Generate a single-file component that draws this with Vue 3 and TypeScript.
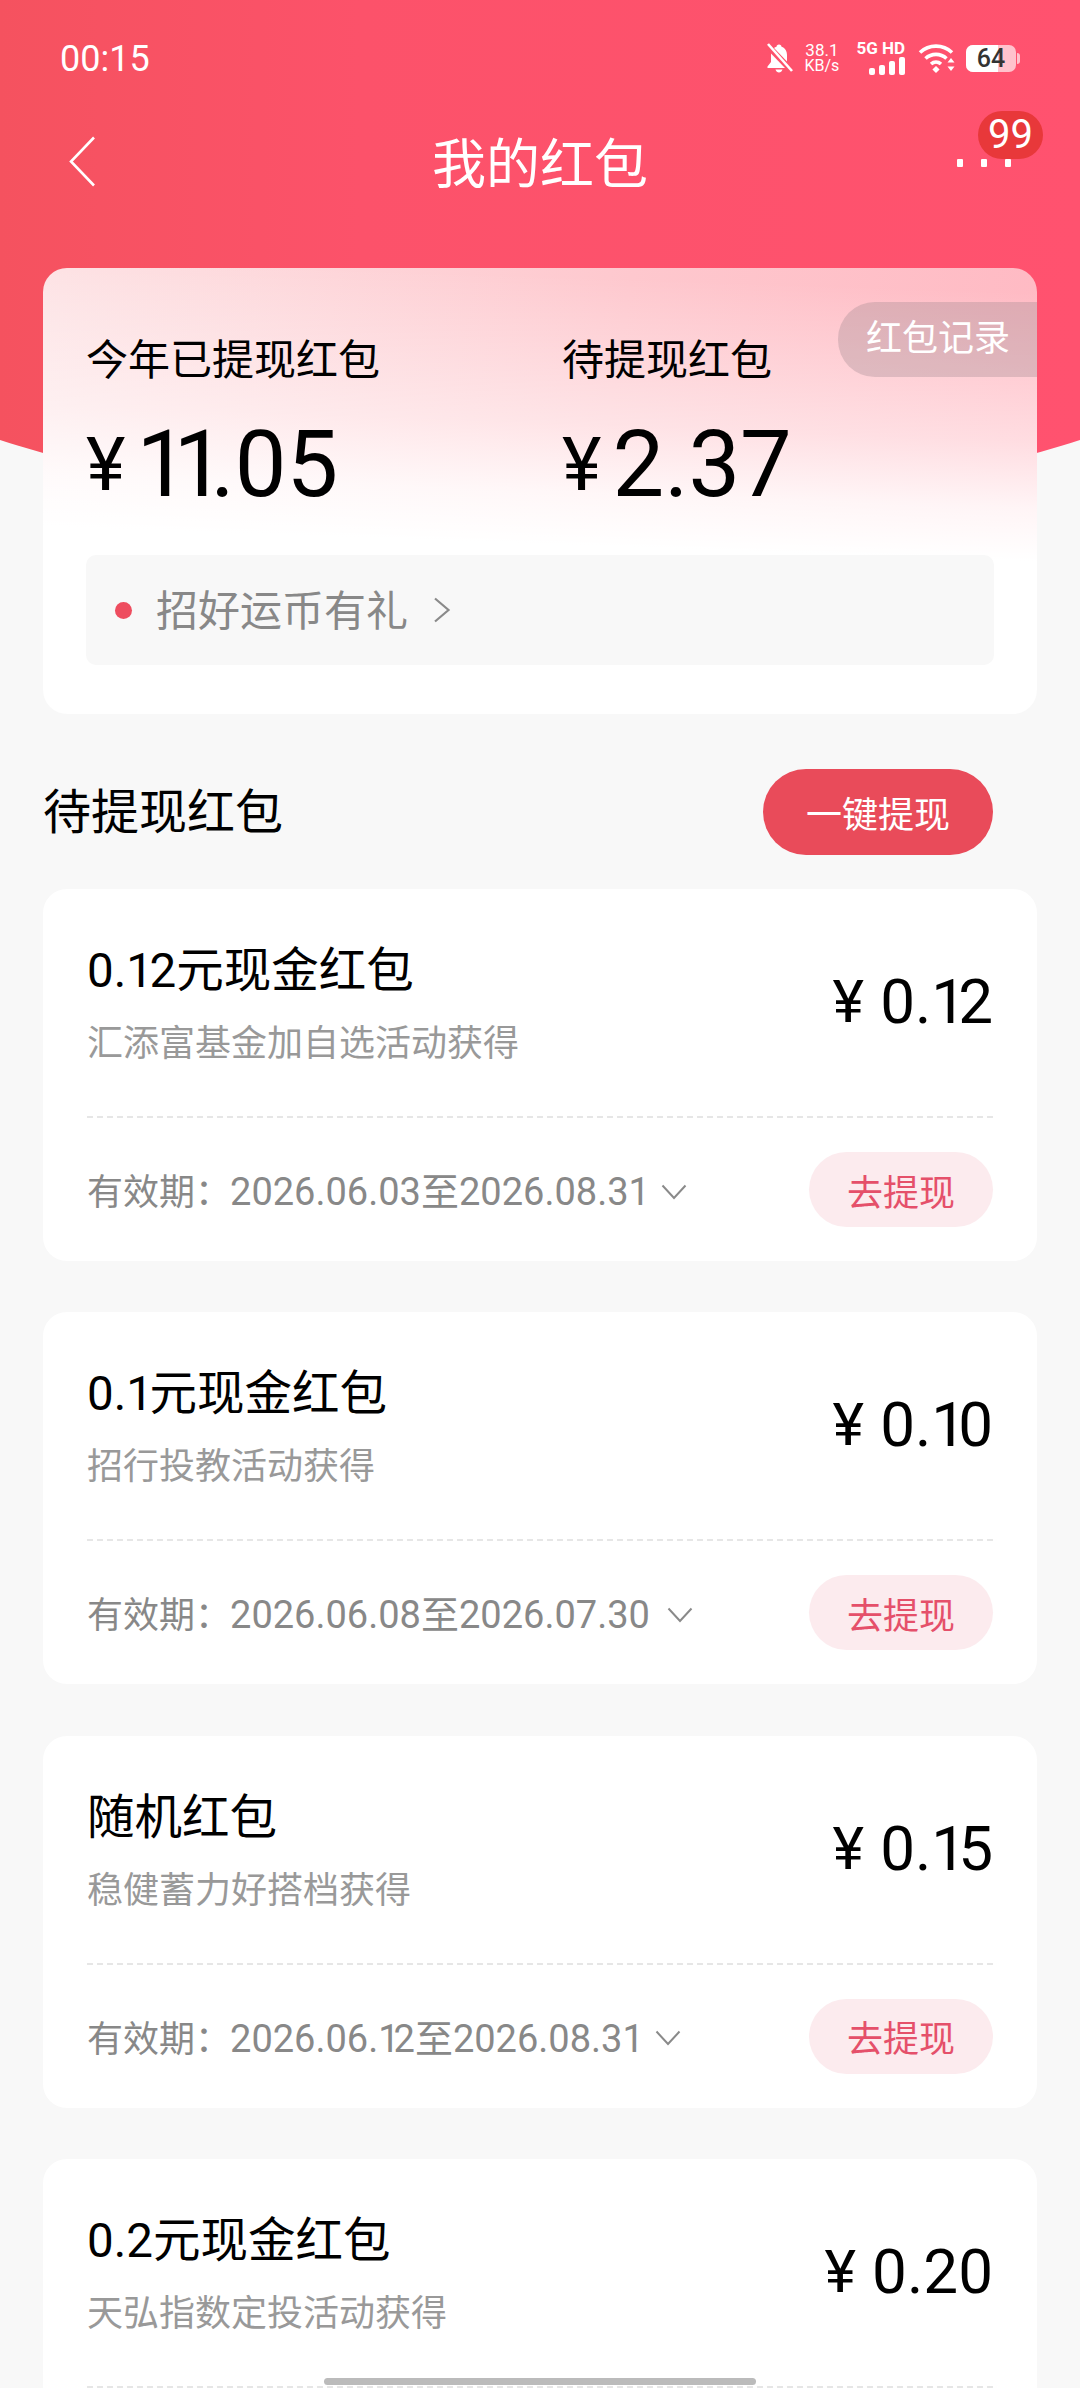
<template>
	<div class="page">
		<div class="status">
			<span class="time">00:15</span>
			<div class="status-icons">
				<svg class="bell" viewBox="0 0 28 30" width="28" height="30">
					<path d="M14 1.500c-1.600 0-2.400 1-2.500 2.200C7.600 5 6 8.300 6 12v7l-3.500 4.500V25h23v-1.500L22 19v-7c0-3.700-1.600-7-5.500-8.300C16.400 2.500 15.600 1.500 14 1.500zM10.500 26.500c.6 1.900 1.900 3 3.500 3s2.900-1.100 3.500-3z" fill="#fff"/>
					<path d="M2 2l24 25" stroke="#fd526b" stroke-width="6"/>
					<path d="M3 1l24 27" stroke="#fff" stroke-width="2.600"/>
				</svg>
				<div class="speed"><span>38.1</span><span>KB/s</span></div>
				<div class="net">
					<span>5G HD</span>
					<svg viewBox="0 0 36 18" width="36" height="18">
						<rect x="0" y="11" width="6" height="7" rx="2" fill="#fff"/>
						<rect x="10" y="8" width="6" height="10" rx="2" fill="#fff"/>
						<rect x="20" y="4" width="6" height="14" rx="2" fill="#fff"/>
						<rect x="30" y="0" width="6" height="18" rx="2" fill="#fff"/>
					</svg>
				</div>
				<svg class="wifi" viewBox="0 0 38 30" width="38" height="30">
					<path d="M2 9.500C11 1 25 1 34 9.500M7.500 15.500C13.500 10 22.500 10 28.500 15.500M13 21c3-2.600 7-2.600 10 0" fill="none" stroke="#fff" stroke-width="3.600"/>
					<path d="M18 23l3.600 3.500L18 30l-3.600-3.500zM33 15l3.500 4.500h-7zM33 28l-3.500-4.500h7z" fill="#fff"/>
				</svg>
				<div class="battery">
					<span class="battery-fill"/>
					<span class="battery-num">64</span>
					<i class="battery-cap"/>
				</div>
			</div>
		</div>

		<div class="nav">
			<svg class="back" viewBox="0 0 27 51" width="27" height="51">
				<path d="M25 1.500 2 25.500l23 24" fill="none" stroke="#fff" stroke-width="2.600"/>
			</svg>
			<h1 class="title">我的红包</h1>
			<div class="more">
				<i/><i/><i/>
				<span class="badge">99</span>
			</div>
		</div>

		<section class="summary">
			<div class="records">红包记录</div>
			<div class="totals">
				<div v-for="total in totals" :key="total.label" class="total">
					<div class="total-label">{{ total.label }}</div>
					<div class="total-amount">
						<span class="yen">¥</span>
						<span class="num"><span v-for="(c, i) in total.amount" :key="i" :class="{ one: c === '1' }">{{ c }}</span></span>
					</div>
				</div>
			</div>
			<div class="promo">
				<i class="promo-dot"/>
				<span class="promo-text">招好运币有礼</span>
				<svg viewBox="0 0 18 26" width="18" height="26">
					<path d="M2 1.500 15.500 13 2 24.500" fill="none" stroke="#8a8a8a" stroke-width="2.200"/>
				</svg>
			</div>
		</section>

		<div class="section-head">
			<h2>待提现红包</h2>
			<button class="withdraw-all">一键提现</button>
		</div>

		<div class="list">
			<article v-for="item in items" :key="item.name" class="packet">
				<div class="packet-top">
					<div>
						<div class="packet-name"><span v-for="(c, i) in item.name" :key="i" :class="{ one: c === '1' }">{{ c }}</span></div>
						<div class="packet-from">{{ item.from }}</div>
					</div>
					<div class="packet-amount">
						<span class="packet-yen">¥</span>
						<span><span v-for="(c, i) in item.amount" :key="i" :class="{ one: c === '1' }">{{ c }}</span></span>
					</div>
				</div>
				<div v-if="item.dates" class="packet-bottom">
					<div class="validity">
						<span>有效期：</span>
						<span class="dates"><span v-for="(c, i) in item.dates" :key="i" :class="{ one: c === '1' }">{{ c }}</span></span>
						<svg viewBox="0 0 26 16" width="26" height="16">
							<path d="M1.500 1.500 13 14 24.500 1.500" fill="none" stroke="#8a8a8a" stroke-width="2"/>
						</svg>
					</div>
					<button class="withdraw">去提现</button>
				</div>
			</article>
		</div>

		<div class="home-bar"/>
	</div>
</template>

<script setup lang="ts">
	interface Packet {
		name: string
		from: string
		amount: string
		dates?: string
	}

	const totals = [
		{ label: '今年已提现红包', amount: '11.05' },
		{ label: '待提现红包', amount: '2.37' }
	]

	const items: Packet[] = [
		{ name: '0.12元现金红包', from: '汇添富基金加自选活动获得', amount: '0.12', dates: '2026.06.03至2026.08.31' },
		{ name: '0.1元现金红包', from: '招行投教活动获得', amount: '0.10', dates: '2026.06.08至2026.07.30' },
		{ name: '随机红包', from: '稳健蓄力好搭档获得', amount: '0.15', dates: '2026.06.12至2026.08.31' },
		{ name: '0.2元现金红包', from: '天弘指数定投活动获得', amount: '0.20' }
	]
</script>

<style>
	html, body
	{
		margin: 0;
		background: #f8f8f8;
	}
</style>

<style scoped>
	.page
	{
		position: relative;
		width: 1080px;
		height: 2388px;
		overflow: hidden;
		background: #f8f8f8;
		font-family: "Roboto", "Noto Sans CJK SC", sans-serif;
		color: #000;
	}

	/* red arc behind the header and the top card */
	.page::before
	{
		content: "";
		position: absolute;
		top: 0;
		left: -200px;
		right: -200px;
		height: 512px;
		border-radius: 0 0 740px 740px / 0 0 228px 228px;
		background: linear-gradient(90deg, #f5525f 200px, #fc526a 560px, #ff526f 1280px);
	}

	/* the digit 1 is narrower than the others in the original font */
	.one
	{
		letter-spacing: -0.13em;
	}

	.num .one
	{
		letter-spacing: -0.16em;
	}

	.dates .one
	{
		letter-spacing: -0.16em;
	}

	.packet-name .one
	{
		letter-spacing: -0.07em;
	}

	.status, .nav, .summary, .section-head, .list
	{
		position: relative;
	}

	.status
	{
		height: 116px;
		padding: 0 60px;
		display: flex;
		align-items: center;
		justify-content: space-between;
		color: #fff;
	}

	.time
	{
		font-size: 36px;
		margin-top: 2px;
	}

	.status-icons
	{
		display: flex;
		align-items: center;
	}

	.bell
	{
		margin-right: 12px;
	}

	.speed
	{
		display: flex;
		flex-direction: column;
		align-items: center;
		font-size: 16px;
		line-height: 16px;
		margin-right: 17px;
	}

	.speed span:first-child
	{
		font-size: 17px;
	}

	.net
	{
		display: flex;
		flex-direction: column;
		align-items: flex-end;
		margin-right: 13px;
		font-size: 17px;
		font-weight: 700;
		line-height: 15px;
		white-space: nowrap;
	}

	.net svg
	{
		margin-top: 1px;
	}

	.wifi
	{
		margin-right: 10px;
	}

	.battery
	{
		position: relative;
		width: 50px;
		height: 27px;
		margin-right: 4px;
		border-radius: 7px;
		background: rgba(255, 255, 255, 0.65);
		display: flex;
		align-items: center;
		justify-content: center;
	}

	.battery-fill
	{
		position: absolute;
		left: 0;
		top: 0;
		bottom: 0;
		width: 64%;
		background: #fff;
		border-radius: 7px 0 0 7px;
	}

	.battery-num
	{
		position: relative;
		font-size: 25px;
		color: #333;
		font-weight: 500;
	}

	.battery-cap
	{
		position: absolute;
		right: -4px;
		top: 8px;
		width: 3px;
		height: 11px;
		border-radius: 0 3px 3px 0;
		background: rgba(255, 255, 255, 0.65);
	}

	.nav
	{
		height: 94px;
		display: flex;
		align-items: center;
		justify-content: center;
	}

	.back
	{
		position: absolute;
		left: 69px;
		top: 20px;
	}

	.title
	{
		margin: 5px 0 0;
		font-size: 54px;
		font-weight: 400;
		line-height: 70px;
		color: #fff;
	}

	.more
	{
		position: absolute;
		left: 957px;
		top: 43px;
		display: flex;
		gap: 18px;
	}

	.more i
	{
		display: block;
		width: 6px;
		height: 8px;
		background: #fff;
		border-radius: 1px;
	}

	.badge
	{
		position: absolute;
		left: 21px;
		top: -48px;
		width: 65px;
		height: 48px;
		border-radius: 24px;
		background: #e8383a;
		color: #fff;
		font-size: 40px;
		line-height: 48px;
		text-align: center;
	}

	.summary
	{
		margin: 58px 43px 0;
		height: 446px;
		box-sizing: border-box;
		padding: 69px 43px 0;
		border-radius: 24px;
		overflow: hidden;
		background:
			linear-gradient(182deg, rgba(255, 255, 255, 0) 5%, rgba(255, 255, 255, 0.5) 36%, rgba(255, 255, 255, 0.85) 50%, #fff 61%),
			linear-gradient(100deg, #fde2e4 0%, #fec8ce 55%, #ffb8c2 100%);
	}

	.records
	{
		position: absolute;
		right: 0;
		top: 34px;
		width: 199px;
		height: 75px;
		box-sizing: border-box;
		padding-left: 28px;
		border-radius: 37px 0 0 37px;
		background: rgba(150, 130, 135, 0.3);
		color: #fff;
		font-size: 36px;
		line-height: 75px;
	}

	.totals
	{
		display: flex;
	}

	.total
	{
		flex: none;
		width: 476px;
	}

	.total-label
	{
		font-size: 42px;
		line-height: 48px;
	}

	.total-amount
	{
		display: flex;
		align-items: center;
		margin-top: 35px;
		height: 90px;
	}

	.yen
	{
		font-size: 75px;
		line-height: 70px;
		margin-right: 11px;
		margin-top: -2px;
	}

	.num
	{
		font-size: 92px;
		line-height: 90px;
	}

	.promo
	{
		margin-top: 45px;
		height: 110px;
		border-radius: 10px;
		background: #f8f8f8;
		display: flex;
		align-items: center;
		padding-left: 29px;
		color: #888;
		font-size: 42px;
	}

	.promo-text
	{
		margin-top: -5px;
	}

	.promo-dot
	{
		width: 17px;
		height: 17px;
		border-radius: 50%;
		background: #ee4d5f;
		margin-right: 24px;
	}

	.promo svg
	{
		margin-left: 25px;
	}

	.section-head
	{
		margin: 55px 87px 0 43px;
		height: 86px;
		display: flex;
		align-items: center;
		justify-content: space-between;
	}

	.section-head h2
	{
		margin: -8px 0 0;
		font-size: 48px;
		font-weight: 400;
	}

	.withdraw-all
	{
		width: 230px;
		height: 86px;
		border: none;
		border-radius: 43px;
		background: #e94b5a;
		color: #fff;
		font-family: inherit;
		font-size: 36px;
		padding: 0;
	}

	.list
	{
		margin: 34px 43px 0;
		display: flex;
		flex-direction: column;
		gap: 51.330px;
	}

	.packet
	{
		height: 372px;
		box-sizing: border-box;
		padding: 0 44px;
		background: #fff;
		border-radius: 24px;
	}

	.packet-top
	{
		height: 229px;
		box-sizing: border-box;
		padding-top: 54px;
		display: flex;
		justify-content: space-between;
		align-items: flex-start;
		border-bottom: 2px dashed #e6e6e6;
	}

	.packet-name
	{
		font-size: 47.500px;
		line-height: 56px;
	}

	.packet-from
	{
		margin-top: 23px;
		font-size: 36px;
		line-height: 44px;
		color: #999;
	}

	.packet-amount
	{
		margin-top: 29px;
		font-size: 62px;
		line-height: 60px;
		display: flex;
		align-items: center;
		gap: 16px;
	}

	.packet-yen
	{
		font-size: 60px;
	}

	.packet-bottom
	{
		height: 143px;
		display: flex;
		align-items: center;
		justify-content: space-between;
	}

	.validity
	{
		display: flex;
		align-items: baseline;
		margin-top: -2px;
		color: #888;
		font-size: 36px;
		white-space: nowrap;
	}

	.dates
	{
		font-size: 38px;
		margin-left: -1px;
	}

	.validity svg
	{
		align-self: center;
		margin-left: 17px;
		margin-top: 6px;
	}

	.withdraw
	{
		width: 184px;
		height: 75px;
		border: none;
		border-radius: 37.500px;
		background: #fcebee;
		color: #e5506a;
		font-family: inherit;
		font-size: 36px;
		padding: 0;
	}

	.home-bar
	{
		position: absolute;
		left: 324px;
		top: 2378px;
		width: 432px;
		height: 7px;
		border-radius: 4px;
		background: #bbb;
	}
</style>
